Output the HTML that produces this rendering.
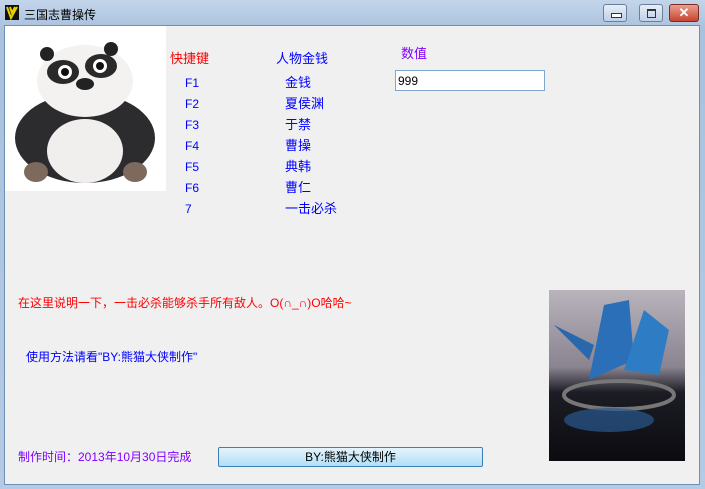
<!DOCTYPE html>
<html><head><meta charset="utf-8"><style>
body{margin:0;width:705px;height:489px;overflow:hidden;font-family:"Liberation Sans","Noto Sans CJK SC",sans-serif;font-size:12px}
.win{position:absolute;left:0;top:0;width:705px;height:489px;background:linear-gradient(#c3d5ea,#a9c1dd 30px,#b5cbe4);}
.client{position:absolute;left:4px;top:25px;width:696px;height:460px;background:#f0f0f0;border:1px solid #6f8fb5;box-sizing:border-box}
.t{position:absolute;white-space:nowrap}
.btn{position:absolute;top:4px;height:18px;border:1px solid #6b7f99;border-radius:3px;box-sizing:border-box;background:linear-gradient(#e6eef8,#c0d0e6)}
</style></head><body>
<div class="win">
<div class="t" style="left:5px;top:5px;width:14px;height:15px;background:#111"><svg width="14" height="15"><path d="M2 2 L6 13 L12 2 M5 2 L7 8 L10 2" stroke="#e8d000" stroke-width="2" fill="none"/></svg></div>
<div class="t" style="left:24px;top:6px;font-size:12px;color:#000">三国志曹操传</div>
<div class="btn" style="left:603px;width:24px"><div style="position:absolute;left:7px;top:8px;width:9px;height:3px;border:1px solid #333;background:#fff"></div></div>
<div class="btn" style="left:639px;width:24px"><div style="position:absolute;left:7px;top:4px;width:7px;height:6px;border:1px solid #333;border-top-width:2px"></div></div>
<div class="btn" style="left:669px;width:30px;background:linear-gradient(#e8a090,#c9452f);border-color:#7a2b22;color:#fff;font-weight:bold;text-align:center;line-height:15px;font-size:13px">✕</div>
<div class="client">
<svg style="position:absolute;left:0;top:0" width="161" height="165"><rect width="161" height="165" fill="#fff"/>
<ellipse cx="80" cy="112" rx="70" ry="45" fill="#2c2b2e"/>
<ellipse cx="80" cy="125" rx="38" ry="32" fill="#f1eeee"/>
<ellipse cx="80" cy="55" rx="48" ry="36" fill="#f4f1f1"/>
<circle cx="42" cy="28" r="7" fill="#222"/><circle cx="106" cy="23" r="7" fill="#222"/>
<ellipse cx="58" cy="46" rx="16" ry="12" fill="#2a2a2a"/><ellipse cx="96" cy="40" rx="16" ry="12" fill="#2a2a2a"/>
<circle cx="60" cy="46" r="7" fill="#fff"/><circle cx="95" cy="40" r="7" fill="#fff"/>
<circle cx="60" cy="46" r="4" fill="#111"/><circle cx="95" cy="40" r="4" fill="#111"/>
<ellipse cx="80" cy="58" rx="9" ry="6" fill="#222"/>
<ellipse cx="31" cy="146" rx="12" ry="10" fill="#7d6a5c"/><ellipse cx="130" cy="146" rx="12" ry="10" fill="#7d6a5c"/>
</svg>
<div class="t" style="left:165px;top:22px;color:#f00;font-size:13px">快捷键</div>
<div class="t" style="left:271px;top:22px;color:#00f;font-size:13px">人物金钱</div>
<div class="t" style="left:396px;top:17px;color:#8000ff;font-size:13px">数值</div>
<div class="t" style="left:180px;top:47px;color:#00f;line-height:21px">F1<br>F2<br>F3<br>F4<br>F5<br>F6<br>7</div>
<div class="t" style="left:280px;top:46px;color:#00f;line-height:21px;font-size:13px">金钱<br>夏侯渊<br>于禁<br>曹操<br>典韩<br>曹仁<br>一击必杀</div>
<div class="t" style="left:390px;top:44px;width:150px;height:21px;background:#fff;border:1px solid #7fa6cc;box-sizing:border-box;padding:3px 2px;color:#000">999</div>
<div class="t" style="left:13px;top:268px;color:#f00">在这里说明一下，一击必杀能够杀手所有敌人。O(∩_∩)O哈哈~</div>
<div class="t" style="left:21px;top:322px;color:#00f">使用方法请看"BY:熊猫大侠制作"</div>
<div class="t" style="left:13px;top:422px;color:#8000ff">制作时间：2013年10月30日完成</div>
<div class="t" style="left:213px;top:421px;width:265px;height:20px;border:1px solid #3c7fb1;border-radius:2px;box-sizing:border-box;background:linear-gradient(#e5f4fc,#b2def7);text-align:center;line-height:18px;color:#000">BY:熊猫大侠制作</div>
<svg style="position:absolute;left:544px;top:264px" width="136" height="171">
<defs><linearGradient id="g" x1="0" y1="0" x2="0" y2="1"><stop offset="0" stop-color="#b9b3bc"/><stop offset=".45" stop-color="#8a8490"/><stop offset=".6" stop-color="#1c1c24"/><stop offset="1" stop-color="#0b0b10"/></linearGradient></defs>
<rect width="136" height="171" fill="url(#g)"/>
<path d="M40 90 L55 15 L80 10 L85 70 Z" fill="#2a6fb8"/><path d="M75 80 L95 20 L120 40 L110 85 Z" fill="#2e7cc4"/>
<path d="M5 35 L45 55 L40 70 Z" fill="#2a68ad"/>
<ellipse cx="70" cy="105" rx="55" ry="14" fill="none" stroke="#777" stroke-width="4"/>
<ellipse cx="60" cy="130" rx="45" ry="12" fill="#2a5a90" opacity=".7"/>
</svg>
</div>
</div>
</body></html>
